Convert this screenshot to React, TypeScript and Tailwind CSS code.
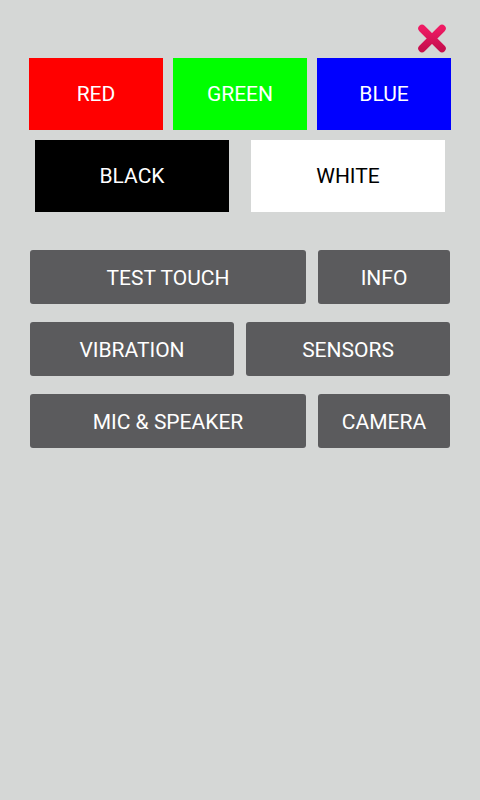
import React from "react";

const gray = "h-[54px] rounded-[3px] bg-[#5b5b5d] text-white text-[21px] flex items-center justify-center pt-[3px]";

export default function App() {
  return (
    <div className="w-[480px] h-[800px] bg-[#d5d7d6] flex flex-col" style={{ fontFamily: "Roboto, 'Liberation Sans', sans-serif" }}>
      <div className="h-[58px] flex justify-end items-start pt-[24px] pr-[33px]">
        <svg width="30" height="29" viewBox="0 0 30 29">
          <defs>
            <linearGradient id="xg" x1="0" y1="0" x2="0" y2="1">
              <stop offset="0" stopColor="#ee1a63" />
              <stop offset="1" stopColor="#c70f4e" />
            </linearGradient>
          </defs>
          <path d="M5 4.5 L25 24.5 M25 4.5 L5 24.5" stroke="url(#xg)" strokeWidth="7.5" strokeLinecap="round" fill="none" />
        </svg>
      </div>
      <div className="flex gap-[10px] pl-[29px] text-[21px] text-white">
        <div className="w-[134px] h-[72px] bg-[#ff0000] flex items-center justify-center pt-[2px]">RED</div>
        <div className="w-[134px] h-[72px] bg-[#00ff00] flex items-center justify-center pt-[2px]">GREEN</div>
        <div className="w-[134px] h-[72px] bg-[#0000ff] flex items-center justify-center pt-[2px]">BLUE</div>
      </div>
      <div className="flex gap-[22px] pl-[35px] mt-[10px] text-[21px]">
        <div className="w-[194px] h-[72px] bg-black text-white flex items-center justify-center pt-[2px]">BLACK</div>
        <div className="w-[194px] h-[72px] bg-white text-black flex items-center justify-center pt-[2px]">WHITE</div>
      </div>
      <div className="flex flex-col gap-[18px] px-[30px] mt-[38px]">
        <div className="flex gap-[12px]">
          <div className={`${gray} w-[276px]`}>TEST TOUCH</div>
          <div className={`${gray} w-[132px]`}>INFO</div>
        </div>
        <div className="flex gap-[12px]">
          <div className={`${gray} w-[204px]`}>VIBRATION</div>
          <div className={`${gray} w-[204px]`}>SENSORS</div>
        </div>
        <div className="flex gap-[12px]">
          <div className={`${gray} w-[276px]`}>MIC &amp; SPEAKER</div>
          <div className={`${gray} w-[132px]`}>CAMERA</div>
        </div>
      </div>
    </div>
  );
}
